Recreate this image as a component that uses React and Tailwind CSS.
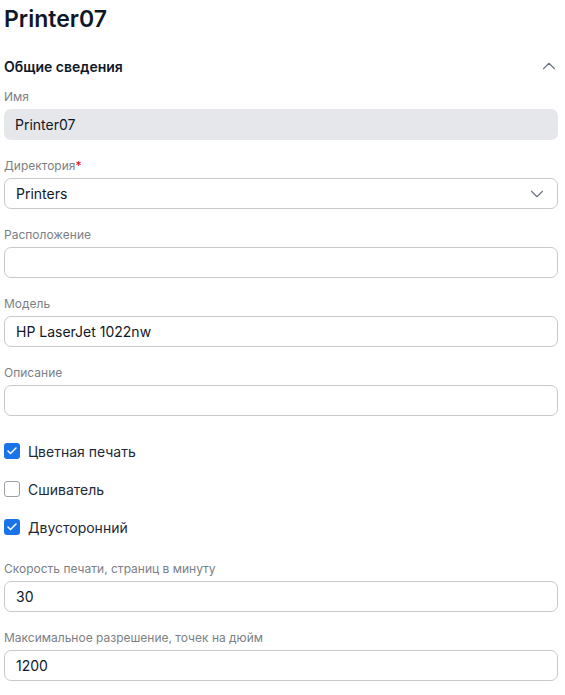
import React, { useState } from "react";
import { ChevronUp, ChevronDown, Check } from "lucide-react";

function Field({ label, value, required, disabled, select }) {
    return (
        <div className="flex flex-col gap-[4px]">
            <label className="text-[12px] leading-[16px] text-[#7b7f86]">
                {label}
                {required && <span className="text-red-600">*</span>}
            </label>
            <div
                className={
                    "h-[31px] rounded-[7px] pl-[11px] flex items-center justify-between text-[14px] text-gray-900 " +
                    (disabled ? "bg-[#e6e7ea] pr-3" : "bg-white border border-[#c8c9cd] pr-[9px]")
                }
            >
                <span>{value}</span>
                {select && <ChevronDown size={22} strokeWidth={1.2} className="text-gray-500" />}
            </div>
        </div>
    );
}

function CheckRow({ label, checked }) {
    return (
        <div className="flex items-center gap-2 h-[22px]">
            {checked ? (
                <div className="w-[16px] h-[16px] rounded-[3px] bg-[#1a73e8] flex items-center justify-center">
                    <Check size={12} strokeWidth={3} className="text-white" />
                </div>
            ) : (
                <div className="w-[16px] h-[16px] rounded-[3px] border border-[#9ca0a6] bg-white" />
            )}
            <span className="text-[14px] text-gray-800">{label}</span>
        </div>
    );
}

export default function App() {
    const [open] = useState(true);

    return (
        <div className="min-h-screen bg-white pl-1 pr-[7px] pt-[3px]" style={{ fontFamily: "Inter, 'Noto Sans', sans-serif" }}>
            <h1 className="text-[23px] leading-[32px] font-semibold text-gray-900">Printer07</h1>

            {/* Section header */}
            <div className="mt-[21px] flex items-center justify-between h-[20px]">
                <h2 className="text-[14px] font-semibold text-gray-900">Общие сведения</h2>
                <ChevronUp size={22} strokeWidth={1.2} className="text-gray-500 mr-[-2px]" />
            </div>

            {open && (
                <div className="mt-[13px] flex flex-col gap-[18px]">
                    <Field label="Имя" value="Printer07" disabled />
                    <Field label="Директория" value="Printers" required select />
                    <Field label="Расположение" value="" />
                    <Field label="Модель" value="HP LaserJet 1022nw" />
                    <Field label="Описание" value="" />

                    <div className="flex flex-col gap-[16px] pt-[6px] pb-[5px]">
                        <CheckRow label="Цветная печать" checked />
                        <CheckRow label="Сшиватель" />
                        <CheckRow label="Двусторонний" checked />
                    </div>

                    <Field label="Скорость печати, страниц в минуту" value="30" />
                    <Field label="Максимальное разрешение, точек на дюйм" value="1200" />
                </div>
            )}
        </div>
    );
}
